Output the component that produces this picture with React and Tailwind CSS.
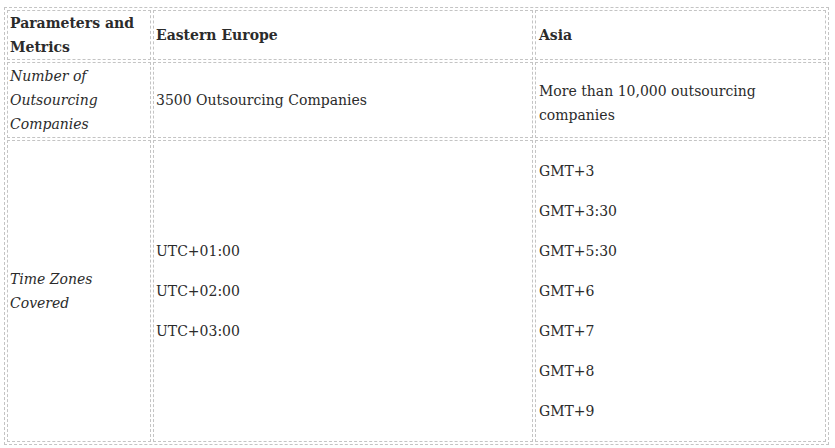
import React from "react";

const cell = "border border-dashed border-[#c4c4c4] px-[2px] py-0 align-middle text-left";

export default function App() {
  return (
    <div className="w-[835px] h-[448px] bg-white pl-[4px] pt-[7px] overflow-hidden" style={{ fontFamily: '"DejaVu Serif", serif' }}>
      <table className="border border-dashed border-[#c4c4c4] border-separate border-spacing-[2px] w-[825px] table-fixed text-[14px] leading-[24px] text-[#2b2b2b]">
        <colgroup>
          <col className="w-[144px]" />
          <col className="w-[380px]" />
          <col />
        </colgroup>
        <tbody>
          <tr>
            <th className={cell + " h-[50px] font-bold"}>Parameters and<br />Metrics</th>
            <th className={cell + " h-[50px] font-bold"}>Eastern Europe</th>
            <th className={cell + " h-[50px] font-bold pl-[3px]"}>Asia</th>
          </tr>
          <tr>
            <td className={cell + " h-[76px] italic"}>Number of<br />Outsourcing<br />Companies</td>
            <td className={cell + " h-[76px]"}>3500 Outsourcing Companies</td>
            <td className={cell + " h-[76px] pl-[3px] pt-[5px]"}>More than 10,000 outsourcing<br />companies</td>
          </tr>
          <tr>
            <td className={cell + " h-[302px] italic"}>Time Zones<br />Covered</td>
            <td className={cell + " h-[302px]"}>
              <div className="flex flex-col gap-[16px]">
                <p>UTC+01:00</p>
                <p>UTC+02:00</p>
                <p>UTC+03:00</p>
              </div>
            </td>
            <td className={cell + " h-[302px] pl-[3px]"}>
              <div className="flex flex-col gap-[16px]">
                <p>GMT+3</p>
                <p>GMT+3:30</p>
                <p>GMT+5:30</p>
                <p>GMT+6</p>
                <p>GMT+7</p>
                <p>GMT+8</p>
                <p>GMT+9</p>
              </div>
            </td>
          </tr>
        </tbody>
      </table>
    </div>
  );
}
